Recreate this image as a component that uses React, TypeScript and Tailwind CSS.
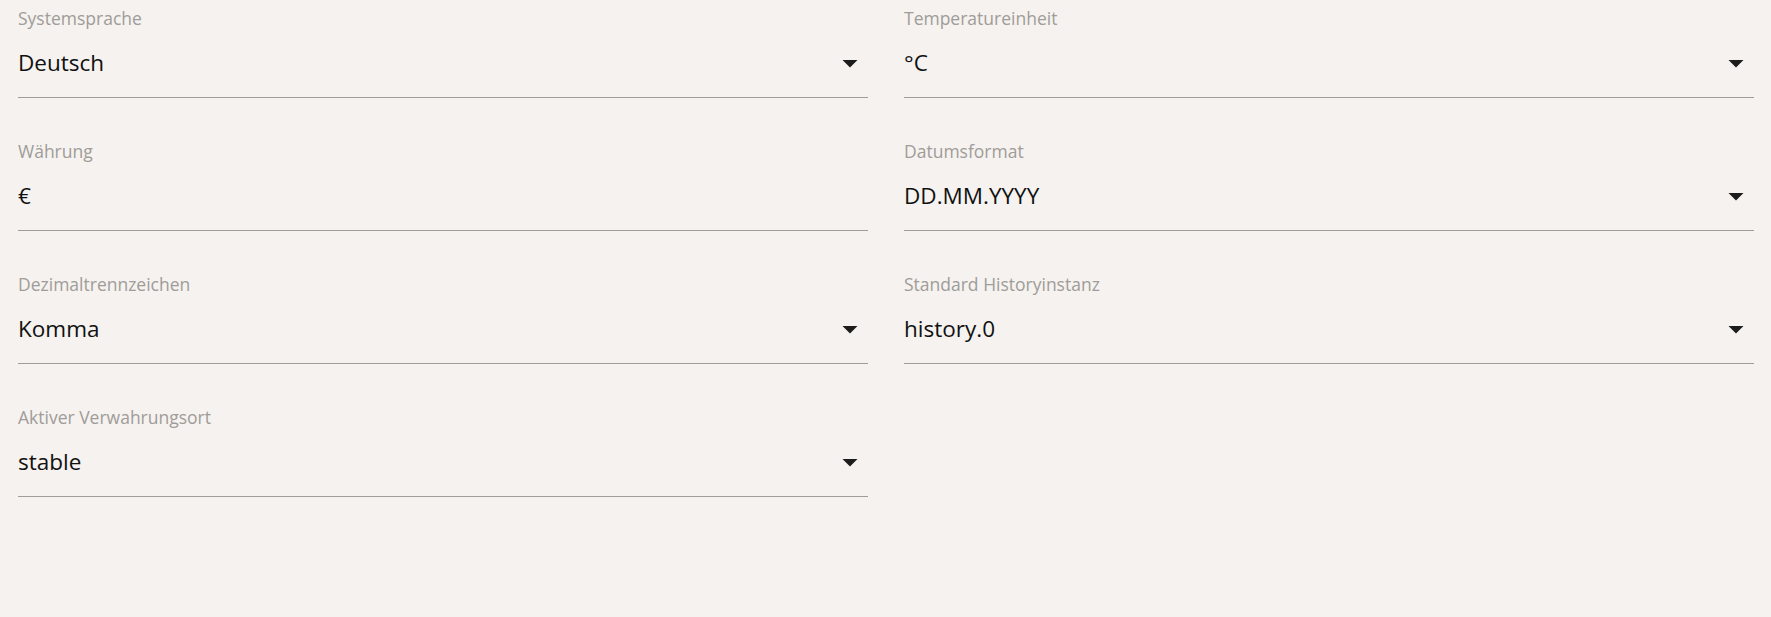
import { ReactNode } from 'react';

interface FieldProps {
  label: string;
  value: string;
  select?: boolean;
}

const ArrowDropDown = () => (
  <svg width={36} height={36} viewBox="0 0 24 24" className="shrink-0 text-[#1c1c1c]">
    <path d="M7 10l5 5 5-5z" fill="currentColor" />
  </svg>
);

const Field = ({ label, value, select = true }: FieldProps) => (
  <div className="flex flex-col pt-[6px] pb-[18px] border-b border-[#a09c99]">
    <span className="text-[17.5px] leading-[24px] text-[#9f9c99]">{label}</span>
    <div className="mt-[17px] flex items-center justify-between h-[32px]">
      <span className="text-[22.5px] leading-[32px] text-[#111]">{value}</span>
      {select && <ArrowDropDown />}
    </div>
  </div>
);

const Grid = ({ children }: { children: ReactNode }) => (
  <div className="grid grid-cols-2 gap-x-[36px] gap-y-[35px] pl-[18px] pr-[17px]">{children}</div>
);

export default function App() {
  return (
    <div
      className="w-full min-h-[617px] bg-[#f5f2ef]"
      style={{ fontFamily: '"Segoe UI", "Open Sans", "Noto Sans", sans-serif' }}
    >
      <Grid>
        <Field label="Systemsprache" value="Deutsch" />
        <Field label="Temperatureinheit" value="°C" />
        <Field label="Währung" value="€" select={false} />
        <Field label="Datumsformat" value="DD.MM.YYYY" />
        <Field label="Dezimaltrennzeichen" value="Komma" />
        <Field label="Standard Historyinstanz" value="history.0" />
        <Field label="Aktiver Verwahrungsort" value="stable" />
      </Grid>
    </div>
  );
}
